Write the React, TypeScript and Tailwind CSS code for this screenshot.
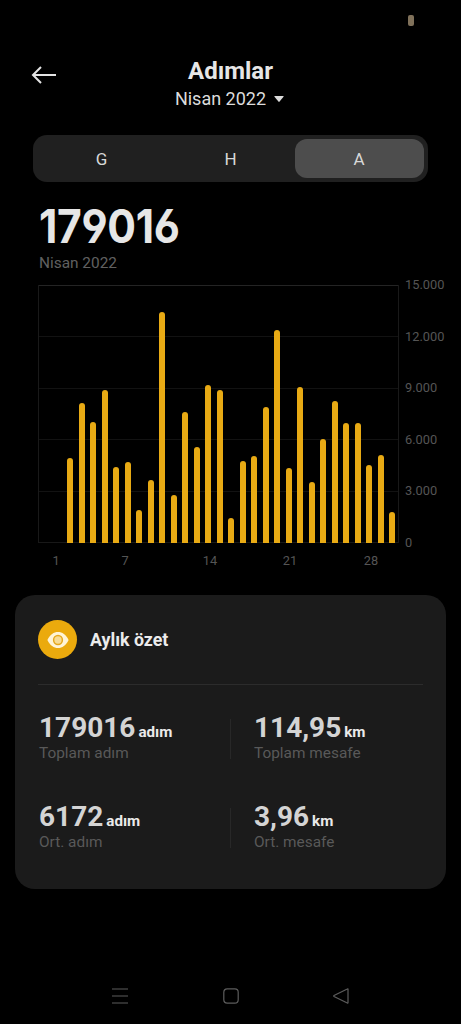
const DAILY_STEPS = [
  0, 4950, 8150, 7020, 8910, 4440, 4720, 1940, 3650, 13440, 2810, 7630, 5610, 9160, 8880,
  1460, 4780, 5070, 7880, 12390, 4350, 9050, 3570, 6020, 8250, 6950, 6950, 4540, 5130, 1810,
];

const MAX_STEPS = 15000;

const Y_LABELS = ['15.000', '12.000', '9.000', '6.000', '3.000', '0'];

function Header() {
  return (
    <header className="grid h-[78px] grid-cols-[58px_1fr_58px] pt-[16px]">
      <button className="flex h-6 items-center pl-[31px] mt-[7px]" aria-label="Geri">
        <svg className="h-[18px] w-[26px] shrink-0" viewBox="0 0 26 18" fill="none" stroke="#e4e4e4" strokeWidth="2">
          <path d="M25 9H2M10 1L2 9l8 8" />
        </svg>
      </button>
      <div className="flex flex-col items-center">
        <h1 className="text-[24px] leading-[30px] font-bold text-[#e6e6e6]">Adımlar</h1>
        <div className="flex items-center gap-2 pr-[2px] text-[#dcdcdc]">
          <span className="text-[18px] leading-[26px]">Nisan 2022</span>
          <svg className="h-[6px] w-[10px]" viewBox="0 0 10 6" fill="currentColor">
            <path d="M0.8 0h8.4q.8 0 .3.7L5.6 5.6q-.6.6-1.2 0L.5.7Q0 0 .8 0z" />
          </svg>
        </div>
      </div>
    </header>
  );
}

function PeriodTabs() {
  return (
    <div className="mx-[33px] mt-[17px] grid h-[47px] grid-cols-3 rounded-[14px] bg-[#202020] p-1 text-[17px] text-[#d8d8d8]">
      <button className="flex items-center justify-center pt-[2px]">G</button>
      <button className="flex items-center justify-center pt-[2px]">H</button>
      <button className="flex items-center justify-center rounded-[12px] bg-[#4d4d4d] pt-[2px] pr-px">A</button>
    </div>
  );
}

function StepsChart() {
  return (
    <section className="pl-[38px]">
      <div className="flex">
        <div className="relative h-[258px] w-[361px] border-x border-[#191919]">
          <div className="absolute inset-0 flex flex-col justify-between">
            <div className="h-px bg-[#242424]" />
            <div className="h-px bg-[#121212]" />
            <div className="h-px bg-[#121212]" />
            <div className="h-px bg-[#121212]" />
            <div className="h-px bg-[#121212]" />
            <div className="h-px bg-[#181818]" />
          </div>
          <div className="relative flex h-full items-end pl-[14px]">
            {DAILY_STEPS.map((steps, i) => (
              <div key={i} className="flex h-full flex-1 items-end justify-center">
                <div
                  className="w-[6px] rounded-t-full bg-[#e8aa14]"
                  style={{ height: `${(steps / MAX_STEPS) * 100}%` }}
                />
              </div>
            ))}
          </div>
        </div>
        <div className="-my-[8px] ml-[6px] flex flex-col justify-between text-[12.8px] leading-[16px] text-[#555]">
          {Y_LABELS.map((label) => (
            <span key={label}>{label}</span>
          ))}
        </div>
      </div>
      <div className="mt-[10px] flex text-[12.8px] leading-[16px] text-[#555]">
        <span className="w-[36px] text-center">1</span>
        <span className="ml-[33px] w-[36px] text-center">7</span>
        <span className="ml-[49px] w-[36px] text-center">14</span>
        <span className="ml-[44px] w-[36px] text-center">21</span>
        <span className="ml-[45px] w-[36px] text-center">28</span>
      </div>
    </section>
  );
}

function Stat({ value, unit, label }: { value: string; unit: string; label: string }) {
  return (
    <div>
      <div className="flex h-[32px] items-baseline gap-[3px] leading-[32px] font-bold">
        <span className="text-[28px] text-[#d4d4d4]">{value}</span>
        <span className="text-[15.2px] text-[#eaeaea]">{unit}</span>
      </div>
      <div className="text-[15.4px] leading-[18px] text-[#595959]">{label}</div>
    </div>
  );
}

function MonthlySummary() {
  return (
    <section className="mx-[15px] mt-[26px] h-[294px] rounded-[20px] bg-[#1b1b1b] px-[23px] pt-[25px]">
      <div className="flex items-center gap-[13px]">
        <div className="flex h-[39px] w-[39px] items-center justify-center rounded-full bg-[#ebaa0d]">
          <svg className="h-[18px] w-[22px]" viewBox="0 0 22 18">
            <path d="M0.4 9C3 3.6 6.8 1 11 1s8 2.6 10.6 8C19 14.4 15.2 17 11 17S3 14.4.4 9z" fill="#fff4d6" />
            <circle cx="11" cy="9" r="4.4" fill="#f8dc94" stroke="#e6a81b" strokeWidth="1.5" />
          </svg>
        </div>
        <h2 className="pt-[2px] text-[17.8px] font-bold text-[#ececec]">Aylık özet</h2>
      </div>
      <div className="mt-[25px] h-px bg-[#2c2c2c]" />
      <div className="mt-[27px] grid grid-cols-[191px_1fr] gap-y-[39px] pl-px">
        <Stat value="179016" unit="adım" label="Toplam adım" />
        <div className="flex items-center">
          <div className="mt-1 mr-[23px] h-[40px] w-px bg-[#282828]" />
          <Stat value="114,95" unit="km" label="Toplam mesafe" />
        </div>
        <Stat value="6172" unit="adım" label="Ort. adım" />
        <div className="flex items-center">
          <div className="mt-1 mr-[23px] h-[40px] w-px bg-[#282828]" />
          <Stat value="3,96" unit="km" label="Ort. mesafe" />
        </div>
      </div>
    </section>
  );
}

function NavBar() {
  return (
    <nav className="mt-auto mb-[20px] flex justify-between px-[112px] text-[#5c5c5c]">
      <svg className="h-4 w-4" viewBox="0 0 16 16" fill="none" stroke="currentColor" strokeWidth="1.2">
        <path d="M0 1h16M0 8h16M0 15h16" />
      </svg>
      <svg className="h-4 w-4" viewBox="0 0 16 16" fill="none" stroke="currentColor" strokeWidth="1.2">
        <rect x="0.8" y="0.8" width="14.4" height="14.4" rx="3.4" />
      </svg>
      <svg className="h-4 w-4" viewBox="0 0 16 16" fill="none" stroke="currentColor" strokeWidth="1.2" strokeLinejoin="round">
        <path d="M15 1.2v13.6q0 .6-.7.2L1 8.5q-.6-.5 0-1L14.3 1q.7-.4.7.2z" />
      </svg>
    </nav>
  );
}

export default function App() {
  return (
    <div className="flex h-[1024px] w-[461px] flex-col overflow-hidden bg-black font-[Roboto,sans-serif]">
      <div className="flex h-[40px] items-center justify-end pr-[47px]">
        <div className="h-[11px] w-[6px] rounded-[2px] bg-[#80715a]" />
      </div>
      <Header />
      <PeriodTabs />
      <div className="mt-[20px] pl-[38px]">
        <div className="h-[50px] origin-left scale-x-[0.905] pl-px font-[Inter,sans-serif] text-[47px] leading-[48px] font-bold tracking-[-0.3px] text-[#e6e6e6] [font-feature-settings:'cv03','cv04','ss01']">
          179016
        </div>
        <div className="mt-px mb-[12px] pl-px text-[15.4px] leading-[20px] text-[#606060]">Nisan 2022</div>
      </div>
      <StepsChart />
      <MonthlySummary />
      <NavBar />
    </div>
  );
}
